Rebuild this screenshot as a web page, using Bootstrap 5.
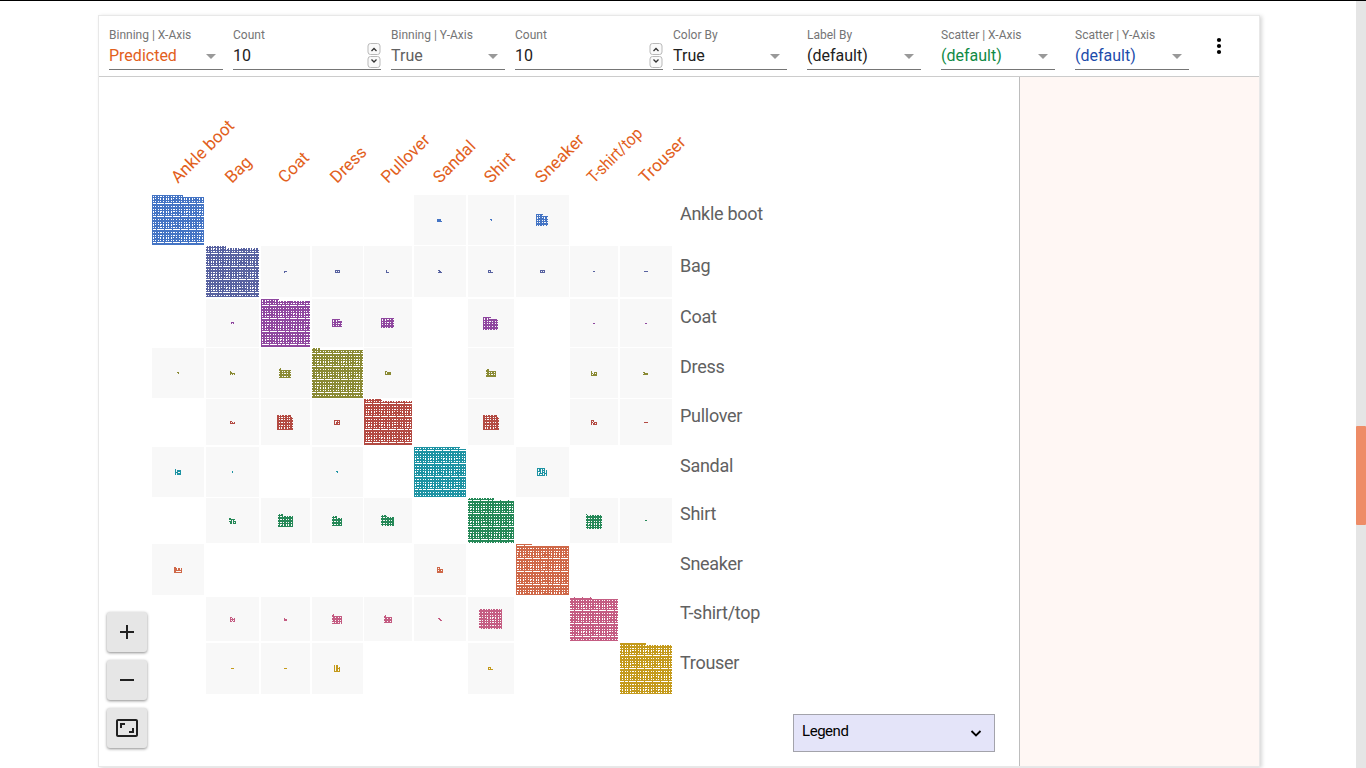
<!DOCTYPE html>
<html lang="en">
<head>
<meta charset="utf-8">
<meta name="viewport" content="width=device-width, initial-scale=1">
<title>Facets Dive</title>
<link rel="stylesheet" href="https://cdn.jsdelivr.net/npm/bootstrap@5.3.0/dist/css/bootstrap.min.css">
<style>
html,body{height:100%;overflow:hidden}
body{font-family:Roboto,"Liberation Sans",sans-serif;background:#fff;border-top:1px solid #000;color:#212121}
.dive{width:1162px;margin:14px 0 0 98px;height:752px;border:1px solid #e8e8e8;box-shadow:2px 1px 4px rgba(0,0,0,.16);background:#fff}
.topbar{height:61px;border-bottom:1px solid #ccc;padding:11px 0 0 10px}
.field{width:114px;height:43px;border-bottom:1px solid #757575;margin-right:10px}
.field.wide{width:148px}
.field.far{margin-right:20px}
.field label{display:block;font-size:12px;line-height:16px;color:#757575;white-space:nowrap}
.field .val{font-size:16px;line-height:24px;padding-top:2px}
.field .line{height:24px}
.field .caret{margin:3px 7px 0 0;border:5px solid transparent;border-top-color:#999;border-bottom:0}
.steps{width:14px}
.steps svg{display:block}
.kebab{margin:10px 0 0 7px}
.side{width:240px;background:#fff7f4;border-left:1px solid #bdbdbd}
.stage{position:relative}
.matrix{display:grid;padding-left:53px;grid-template-columns:54px 55px 51px 52px 50px 54px 48px 54px 50px 60px 120px;grid-template-rows:118px 51px 53px 49px 51px 48px 51px 46px 53px 46px 53px}
.matrix svg{display:block}
.xname span{font-size:17px;line-height:20px;color:#e2601c;white-space:nowrap;transform:rotate(-45deg);transform-origin:0 16px;margin-bottom:7px;width:0}
.xname .tight{transform:rotate(-45deg) scaleX(.89)}
.yname{font-size:18px;line-height:22px;color:#616161;white-space:nowrap;letter-spacing:-.28px}
.zoomers{position:absolute;left:8px;bottom:18px;gap:8px}
.zoomers .btn{width:40px;height:40px;background:#e6e6e6;border-radius:3px;box-shadow:0 1px 3px rgba(0,0,0,.45);border:0}
.legendbox{position:absolute;right:24px;bottom:14px;width:202px;height:38px;background:#e4e4f9;border:1px solid #a3a3ab;padding:0 12px 3px 8px;font-size:15px;letter-spacing:-.45px;color:#000}
.track{position:absolute;right:0;top:1px;width:10px;height:767px;background:#e5e5e5;padding-top:425px}
.thumb{height:99px;background:#ee8c67;border-radius:1px}
</style>
</head>
<body>
<main class="dive d-flex flex-column">
  <div class="topbar d-flex flex-shrink-0" id="bar"></div>
  <div class="d-flex flex-grow-1">
    <section class="stage flex-grow-1">
      <div class="matrix" id="matrix"></div>
      <div class="zoomers d-flex flex-column">
        <button class="btn p-0 d-flex align-items-center justify-content-center" aria-label="Zoom in"><svg width="24" height="24" fill="#212121"><path d="M19 13h-6v6h-2v-6H5v-2h6V5h2v6h6z"/></svg></button>
        <button class="btn p-0 d-flex align-items-center justify-content-center" aria-label="Zoom out"><svg width="24" height="24" fill="#212121"><path d="M19 13H5v-2h14z"/></svg></button>
        <button class="btn p-0 d-flex align-items-center justify-content-center" aria-label="Fit"><svg width="24" height="24" fill="#212121"><path d="M19 12h-2v3h-3v2h5v-5zM7 9h3V7H5v5h2V9zm14-6H3c-1.100 0-2 .9-2 2v14c0 1.100.9 2 2 2h18c1.100 0 2-.9 2-2V5c0-1.100-.9-2-2-2zm0 16.010H3V4.990h18v14.020z"/></svg></button>
      </div>
      <div class="legendbox d-flex align-items-center justify-content-between"><span>Legend</span><svg width="12" height="8" class="mt-1" fill="none" stroke="#000" stroke-width="1.800"><path d="M1.500 1L6 5.500 10.500 1"/></svg></div>
    </section>
    <aside class="side flex-shrink-0"></aside>
  </div>
</main>
<div class="track"><div class="thumb"></div></div>
<script src="https://cdn.jsdelivr.net/npm/bootstrap@5.3.0/dist/js/bootstrap.bundle.min.js"></script>
<script>
const fields = [
  ['Binning | X-Axis','Predicted','#e2601c',''],['Count','10','#212121','wide'],
  ['Binning | Y-Axis','True','#616161',''],['Count','10','#212121','wide'],
  ['Color By','True','#212121','far'],['Label By','(default)','#212121','far'],
  ['Scatter | X-Axis','(default)','#108a45','far'],['Scatter | Y-Axis','(default)','#1c4cab','far']];
const steps = '<div class="steps"><svg width="14" height="26" fill="#fafafa" stroke="#b9b9b9"><rect x="1" y="1.500" width="12" height="11" rx="2.500"/><rect x="1" y="14.500" width="12" height="11" rx="2.500"/><path d="M4.500 9L7 6.500 9.500 9M4.500 17.500L7 20l2.500-2.500" fill="none" stroke="#333" stroke-width="1.300"/></svg></div>';
document.getElementById('bar').innerHTML = fields.map(f =>
  `<div class="field flex-shrink-0 ${f[3]}"><label>${f[0]}</label><div class="line d-flex justify-content-between align-items-center"><span class="val" style="color:${f[2]}">${f[1]}</span>${f[3]==='wide'?steps:'<i class="caret"></i>'}</div></div>`
).join('') + '<svg class="kebab" width="6" height="20"><circle cx="3" cy="3" r="2.100"/><circle cx="3" cy="9" r="2.100"/><circle cx="3" cy="15" r="2.100"/></svg>';

const names = ['Ankle boot','Bag','Coat','Dress','Pullover','Sandal','Shirt','Sneaker','T-shirt/top','Trouser'];
const colors = ['#4474c4','#5862a0','#8f479f','#8a8a34','#b34a42','#1d93a3','#258857','#cf6848','#c45c82','#c49a1b'];
const W = [52,53,49,51,48,52,46,53,48,52], H = [50,51,48,50,46,50,45,51,44,51];
// width of the unfinished top row of each diagonal bin
const tops = [31,20,18,8,18,46,26,16,22,26];
// off-diagonal bins: a small bitmap, or [width, height, top row width]
const bins = [
 {5:'####./####./#####',6:'##/.#',7:[12,12,7]},
 {2:'###/#..',3:'#####/#.#.#/#####',4:'#../#../###',5:'##../.##./####',6:'###../#.#../#####',7:'#####/#.#.#/#####',8:'##',9:'####'},
 {1:'###/#.#',3:[10,8,8],4:[13,10,13],6:[15,13,8],8:'##',9:'##'},
 {0:'##/.#',1:'#..../##.../#####/#.#.#',2:[12,10,2],4:'##..../#.####/#.####/######',6:[10,8,3],8:'#...../#..###/##.#.#/#.####/######',9:'##.../.####/#####'},
 {1:'##.../#.#.#/#####',2:[16,15,14],3:'######/#..#.#/#.####/#.##.#/######',6:[16,15,14],8:'###.../#.#.../##.###/#.##.#/#.####',9:'####'},
 {0:'#...../#.####/#.####/###..#/#.####/#.####',1:'#/#',3:'##/.#',7:'########../#.##.#.#../#.##.###.#/####.#.#.#/#..#.###.#/#.####.###/#.#..#.#.#/########.#'},
 {1:'##...../######./..#.#../###.###/.##.#.#/.##.###',2:[15,13,5],3:[10,10,5],4:[13,11,6],8:[16,16,1],9:'##'},
 {0:'##....../###.##.#/###.##.#/########/##.....#/########',5:'###.../#.#.../######/#.##.#/######/######'},
 {1:'##.../#.#.#/#####/#.#.#/##.##',2:'#../###/###',3:[10,10,2],4:[8,8,2],5:'##../.##./..##',6:[23,20,23]},
 {1:'###',2:'###',3:'#.##../#.##../#.##.#/#.####/#.##.#/#.##.#/######',6:'###../#.#../#####'}
];
// sprite lattice: gaps fall between sprites, on an uneven pixel pitch
const gaps = [0,1,0,1,0,0,1,0,1,0,0,1,0];
const lattice = (w,h,t,s) => Array.from({length:h},(_,y)=>Array.from({length:w},(_,x)=>{
  if (y<2 && x>=t) return '.';
  const gx = gaps[(x+s)%13], gy = gaps[(y+s)%13];
  const row = (y+s)%13===8 && x%4!==0 && h>20;
  const tall = gx && (y+s)%13===4 && x%3!==0;
  const wide = gy && (x+s)%13===9 && y%3!==0;
  return (gx&&gy)||row||tall||wide ? '.' : '#';
}).join(''));
const draw = (rows,w,h,c,bg) => {
  const ox = Math.round((w-rows[0].length)/2-.1), oy = Math.round((h-rows.length)/2);
  let d = '';
  rows.forEach((r,y)=>[...r].forEach((p,x)=>{ if(p==='#') d+=`M${ox+x} ${oy+y}h1v1h-1z`; }));
  return `<svg width="${w}" height="${h}" shape-rendering="crispEdges">${bg?`<rect width="${w}" height="${h}" fill="#f8f8f8"/>`:''}<path fill="${c}" d="${d}"/></svg>`;
};
let out = names.map((n,i)=>`<div class="xname d-flex align-items-end"><span class="${n.includes('/')?'tight':''}" style="margin-left:${W[i]/2-.5}px">${n}</span></div>`).join('') + '<div></div>';
names.forEach((n,r)=>{
  names.forEach((_,c)=>{
    const b = bins[r][c];
    let g = '';
    if (r===c) g = draw(lattice(W[c],H[r],tops[r],r),W[c],H[r],colors[r],false);
    else if (b) g = draw(typeof b==='string' ? b.split('/') : lattice(b[0],b[1],b[2],r),W[c],H[r],colors[r],true);
    out += `<div>${g}</div>`;
  });
  out += `<div class="yname" style="padding-top:${Math.round(H[r]*.6-21.8)}px">${n}</div>`;
});
document.getElementById('matrix').innerHTML = out;
</script>
</body>
</html>
